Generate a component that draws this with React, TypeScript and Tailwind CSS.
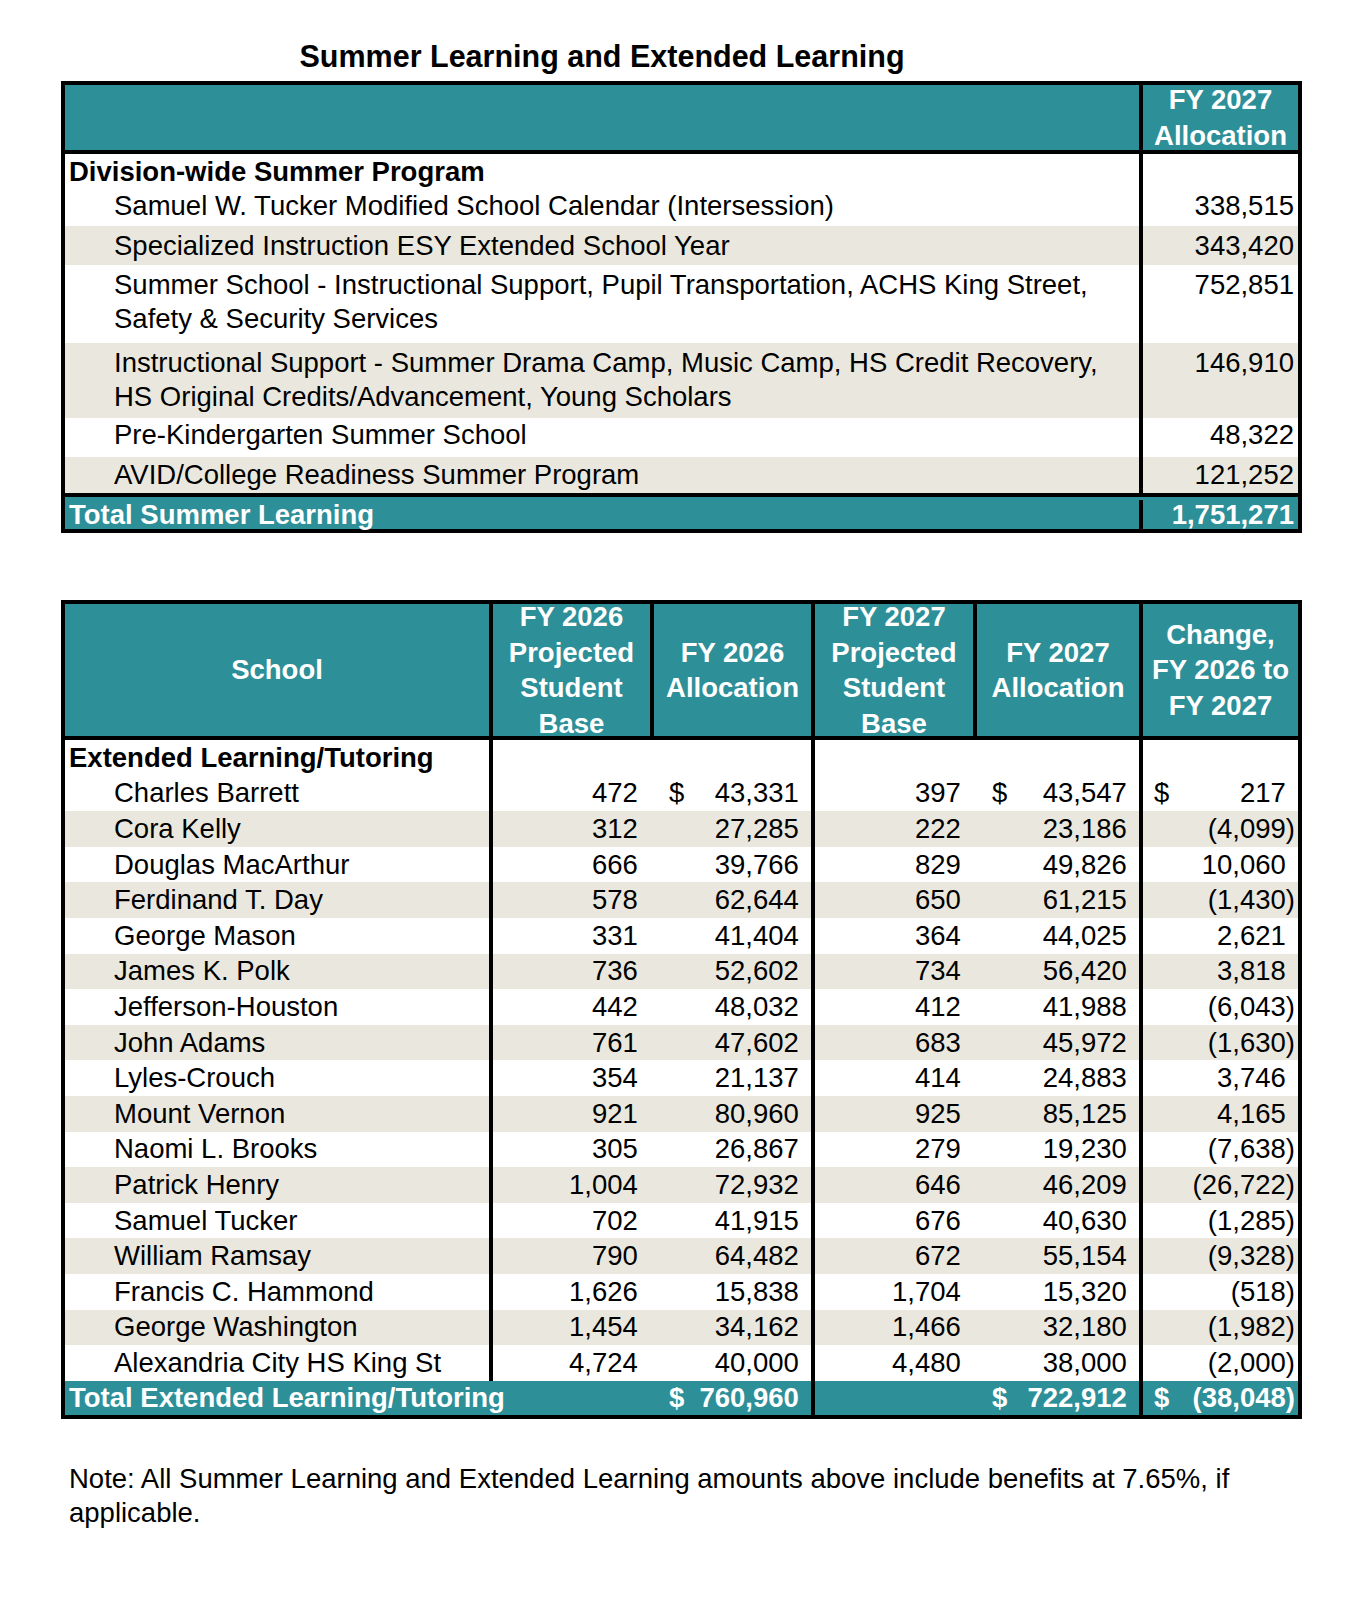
const summerRows = [
  { label: 'Division-wide Summer Program', value: '', h: 'h-[36px]', bold: true, shaded: false, nudge: '' },
  { label: 'Samuel W. Tucker Modified School Calendar (Intersession)', value: '338,515', h: 'h-[36px]', shaded: false, nudge: 'pb-[4px]' },
  { label: 'Specialized Instruction ESY Extended School Year', value: '343,420', h: 'h-[39px]', shaded: true, nudge: '' },
  {
    label: ['Summer School - Instructional Support, Pupil Transportation, ACHS King Street,', 'Safety & Security Services'],
    value: '752,851',
    h: 'h-[78px]',
    shaded: false,
    nudge: '',
  },
  {
    label: ['Instructional Support - Summer Drama Camp, Music Camp, HS Credit Recovery,', 'HS Original Credits/Advancement, Young Scholars'],
    value: '146,910',
    h: 'h-[75px]',
    shaded: true,
    nudge: '',
  },
  { label: 'Pre-Kindergarten Summer School', value: '48,322', h: 'h-[39px]', shaded: false, nudge: 'pb-[5px]' },
  { label: 'AVID/College Readiness Summer Program', value: '121,252', h: 'h-[36px]', shaded: true, nudge: '' },
];

const schools = [
  ['Charles Barrett', '472', '43,331', '397', '43,547', '217'],
  ['Cora Kelly', '312', '27,285', '222', '23,186', '(4,099)'],
  ['Douglas MacArthur', '666', '39,766', '829', '49,826', '10,060'],
  ['Ferdinand T. Day', '578', '62,644', '650', '61,215', '(1,430)'],
  ['George Mason', '331', '41,404', '364', '44,025', '2,621'],
  ['James K. Polk', '736', '52,602', '734', '56,420', '3,818'],
  ['Jefferson-Houston', '442', '48,032', '412', '41,988', '(6,043)'],
  ['John Adams', '761', '47,602', '683', '45,972', '(1,630)'],
  ['Lyles-Crouch', '354', '21,137', '414', '24,883', '3,746'],
  ['Mount Vernon', '921', '80,960', '925', '85,125', '4,165'],
  ['Naomi L. Brooks', '305', '26,867', '279', '19,230', '(7,638)'],
  ['Patrick Henry', '1,004', '72,932', '646', '46,209', '(26,722)'],
  ['Samuel Tucker', '702', '41,915', '676', '40,630', '(1,285)'],
  ['William Ramsay', '790', '64,482', '672', '55,154', '(9,328)'],
  ['Francis C. Hammond', '1,626', '15,838', '1,704', '15,320', '(518)'],
  ['George Washington', '1,454', '34,162', '1,466', '32,180', '(1,982)'],
  ['Alexandria City HS King St', '4,724', '40,000', '4,480', '38,000', '(2,000)'],
];

// accounting style: keeps a slot for the closing paren so positives line up
function Num({ v }: { v: string }) {
  const neg = v.startsWith('(');
  return (
    <span className="whitespace-nowrap">
      {neg ? v.slice(0, -1) : v}
      <span className={neg ? '' : 'invisible'}>)</span>
    </span>
  );
}

function Money({ v, dollar, pl }: { v: string; dollar?: boolean; pl: string }) {
  return (
    <div className={`flex h-full items-center justify-between ${pl} pr-[3px]`}>
      <span>{dollar ? '$' : ''}</span>
      <Num v={v} />
    </div>
  );
}

export default function App() {
  return (
    <div className="min-h-screen bg-white font-['Liberation_Sans',Arial,sans-serif] text-[27.5px] text-black">
      {/* title */}
      <div className="ml-[65px] w-[1074px] pt-[38px] text-center text-[30.5px] font-bold leading-[36px]">
        Summer Learning and Extended Learning
      </div>

      {/* summer learning table */}
      <div className="ml-[61px] mt-[7px] w-[1241px] border-4 border-black">
        <div className="flex h-[69px] border-b-4 border-black bg-[#2d8f98] font-bold leading-[36px] text-white">
          <div className="w-[1074px]" />
          <div className="flex w-[159px] items-center justify-center border-l-4 border-black text-center">
            FY 2027
            <br />
            Allocation
          </div>
        </div>
        {summerRows.map((r, i) => {
          const multi = Array.isArray(r.label);
          const align = multi ? 'items-start pt-[3px]' : `items-center ${r.nudge}`;
          return (
            <div key={i} className={`flex ${r.h} ${r.shaded ? 'bg-[#eae8de]' : 'bg-white'} leading-[34px]`}>
              <div className={`flex w-[1074px] ${align} ${r.bold ? 'pl-[4px] font-bold' : 'pl-[49px]'}`}>
                {multi ? (
                  <div>
                    {(r.label as string[]).map((l) => (
                      <div key={l}>{l}</div>
                    ))}
                  </div>
                ) : (
                  <span className="whitespace-nowrap">{r.label}</span>
                )}
              </div>
              <div className={`flex w-[159px] justify-end border-l-4 border-black pr-[4px] ${align}`}>{r.value}</div>
            </div>
          );
        })}
        <div className="flex h-[36px] border-t-4 border-black bg-[#2d8f98] pt-[3px] font-bold leading-[32px] text-white">
          <div className="flex w-[1074px] items-center pl-[4px]">Total Summer Learning</div>
          <div className="flex w-[159px] items-center justify-end border-l-4 border-black pr-[4px]">1,751,271</div>
        </div>
      </div>

      {/* extended learning table */}
      <div className="ml-[61px] mt-[67px] w-[1241px] border-4 border-black">
        <div className="flex h-[136px] border-b-4 border-black bg-[#2d8f98] text-center font-bold leading-[35.5px] text-white">
          <div className="flex w-[424px] items-center justify-center">School</div>
          <div className="flex w-[161px] items-center justify-center border-l-4 border-black">
            <div>FY 2026<br />Projected<br />Student<br />Base</div>
          </div>
          <div className="flex w-[161px] items-center justify-center border-l-4 border-black">
            <div>FY 2026<br />Allocation</div>
          </div>
          <div className="flex w-[162px] items-center justify-center border-l-4 border-black">
            <div>FY 2027<br />Projected<br />Student<br />Base</div>
          </div>
          <div className="flex w-[166px] items-center justify-center border-l-4 border-black">
            <div>FY 2027<br />Allocation</div>
          </div>
          <div className="flex w-[159px] items-center justify-center border-l-4 border-black">
            <div>Change,<br />FY 2026 to<br />FY 2027</div>
          </div>
        </div>

        <div className="flex h-[35.6px] bg-white leading-[34px]">
          <div className="flex w-[424px] items-center pl-[4px] font-bold">Extended Learning/Tutoring</div>
          <div className="w-[161px] border-l-4 border-black" />
          <div className="w-[161px] border-l-4 border-transparent" />
          <div className="w-[162px] border-l-4 border-black" />
          <div className="w-[166px] border-l-4 border-transparent" />
          <div className="w-[159px] border-l-4 border-black" />
        </div>

        {schools.map((s, i) => (
          <div key={s[0]} className={`flex h-[35.6px] leading-[34px] ${i % 2 === 1 ? 'bg-[#eae8de]' : 'bg-white'}`}>
            <div className="flex w-[424px] items-center whitespace-nowrap pl-[49px]">{s[0]}</div>
            <div className="flex w-[161px] items-center justify-end border-l-4 border-black pr-[3px]">
              <Num v={s[1]} />
            </div>
            <div className="w-[161px] border-l-4 border-transparent">
              <Money v={s[2]} dollar={i === 0} pl="pl-[15px]" />
            </div>
            <div className="flex w-[162px] items-center justify-end border-l-4 border-black pr-[3px]">
              <Num v={s[3]} />
            </div>
            <div className="w-[166px] border-l-4 border-transparent">
              <Money v={s[4]} dollar={i === 0} pl="pl-[15px]" />
            </div>
            <div className="w-[159px] border-l-4 border-black">
              <Money v={s[5]} dollar={i === 0} pl="pl-[11px]" />
            </div>
          </div>
        ))}

        <div className="flex h-[34px] bg-[#2d8f98] font-bold leading-[32px] text-white">
          <div className="flex w-[585px] items-center whitespace-nowrap pl-[4px]">Total Extended Learning/Tutoring</div>
          <div className="w-[161px] border-l-4 border-transparent">
            <Money v="760,960" dollar pl="pl-[15px]" />
          </div>
          <div className="w-[162px] border-l-4 border-black" />
          <div className="w-[166px] border-l-4 border-transparent">
            <Money v="722,912" dollar pl="pl-[15px]" />
          </div>
          <div className="w-[159px] border-l-4 border-black">
            <Money v="(38,048)" dollar pl="pl-[11px]" />
          </div>
        </div>
      </div>

      <p className="ml-[69px] mt-[43px] w-[1240px] leading-[34px]">
        Note: All Summer Learning and Extended Learning amounts above include benefits at 7.65%, if applicable.
      </p>
    </div>
  );
}
